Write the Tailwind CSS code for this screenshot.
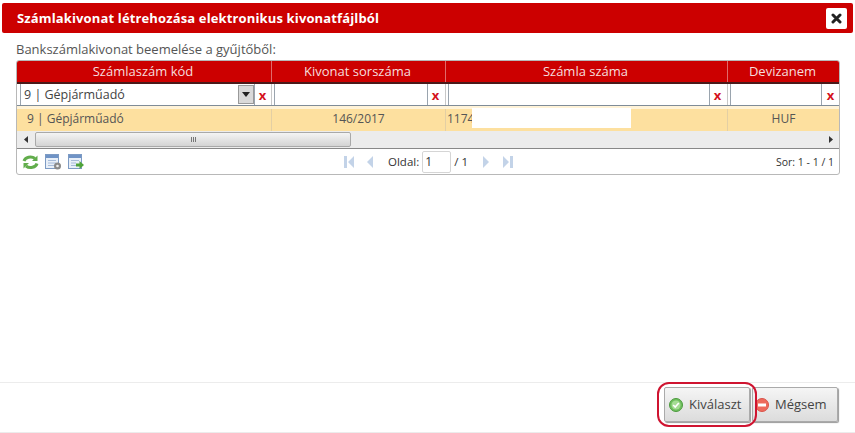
<!doctype html>
<html lang="en">
<head>
    <meta charset="UTF-8">
    <title>Számlakivonat</title>
    <script src="https://cdn.jsdelivr.net/npm/@tailwindcss/browser@4"></script>
</head>
<body class="bg-white">
<div class="relative w-[855px] h-[433px] overflow-hidden flex flex-col font-['Open_Sans',sans-serif] text-[12px] text-[#444]">
    <!-- title bar -->
    <div class="mt-[3px] mx-[2px] h-[30px] shrink-0 bg-[#cc0000] rounded-[2px] flex items-center justify-between pl-[15px] pr-[6px]">
        <span class="text-white font-bold text-[13px] leading-none tracking-[0.14px]">Számlakivonat létrehozása elektronikus kivonatfájlból</span>
        <span class="w-[21px] h-[21px] bg-white rounded-[2px] flex items-center justify-center">
            <svg width="11" height="11" viewBox="0 0 11 11"><path d="M2 2l7 7M9 2l-7 7" stroke="#222" stroke-width="3" stroke-linecap="round"/></svg>
        </span>
    </div>

    <div class="px-[16px] pt-[8px] h-[349px] shrink-0">
        <div class="text-[13px] leading-[17px] h-[19px] text-[#555]">Bankszámlakivonat beemelése a gyűjtőből:</div>
        <!-- grid -->
        <div class="w-[824px] border border-[#b8b8b8] rounded-[3px] overflow-hidden">
            <div class="grid grid-cols-[255px_174px_282px_111px] h-[23px] bg-[#cc0000] text-[#f6dede] text-[13px] border-b-2 border-b-[#4a1a1a]">
                <div class="flex items-center justify-center border-r border-[#e06a6a] pr-[2px]">Számlaszám kód</div>
                <div class="flex items-center justify-center border-r border-[#e06a6a] pr-[2px]">Kivonat sorszáma</div>
                <div class="flex items-center justify-center border-r border-[#e06a6a] pr-[2px]">Számla száma</div>
                <div class="flex items-center justify-center pr-[2px]">Devizanem</div>
            </div>
            <div class="grid grid-cols-[255px_174px_282px_111px] h-[22px] bg-white border-b border-[#7f8c98]">
                <div class="flex items-center pl-[3px] border-r border-[#c8c8c8]">
                    <div class="w-[235px] h-full border-x border-[#9aa4ae] flex items-center justify-between pl-[3px] text-[#444]">
                        <span class="text-[12.500px] pt-[2px]">9 | Gépjárműadó</span>
                        <span class="w-[16px] h-[19px] bg-[#d9d9d9] border border-[#999] flex items-center justify-center"><svg width="8" height="5" viewBox="0 0 8 5"><path d="M0 0h8L4 5z" fill="#222"/></svg></span>
                    </div>
                    <span class="w-[15px] pt-[2px] text-center text-[#d5121e] font-bold text-[13px] leading-none">x</span>
                </div>
                <div class="flex items-center pl-[2px] border-r border-[#c8c8c8]">
                    <div class="w-[154px] h-full border-x border-[#9aa4ae]"></div>
                    <span class="w-[15px] pt-[2px] text-center text-[#d5121e] font-bold text-[13px] leading-none">x</span>
                </div>
                <div class="flex items-center pl-[2px] border-r border-[#c8c8c8]">
                    <div class="w-[262px] h-full border-x border-[#9aa4ae]"></div>
                    <span class="w-[15px] pt-[2px] text-center text-[#d5121e] font-bold text-[13px] leading-none">x</span>
                </div>
                <div class="flex items-center pl-[2px]">
                    <div class="w-[92px] h-full border-x border-[#9aa4ae]"></div>
                    <span class="w-[17px] pt-[2px] text-center text-[#d5121e] font-bold text-[13px] leading-none">x</span>
                </div>
            </div>
            <div class="grid grid-cols-[255px_174px_282px_111px] h-[25px] bg-[#fde09f] border-t-[3px] border-t-[#fff3d8] text-[12px] text-[#555]">
                <div class="flex items-center pl-[10px] pb-[2px] border-r border-[#e3cfa4]">9 | Gépjárműadó</div>
                <div class="flex items-center justify-center pb-[2px] border-r border-[#e3cfa4]">146/2017</div>
                <div class="flex items-start pl-[1px] border-r border-[#e3cfa4]">
                    <span class="w-[25px] whitespace-nowrap leading-[19px]">1174</span>
                    <span class="relative w-[159px] h-[20px] -mt-px bg-white"></span>
                </div>
                <div class="flex items-center justify-center pb-[2px]">HUF</div>
            </div>
            <!-- scrollbar -->
            <div class="h-[18px] bg-[#ececec] border-b border-[#888] flex items-center">
                <span class="w-[18px] flex justify-center"><svg width="4" height="7" viewBox="0 0 4 7"><path d="M4 0v7L0 3.500z" fill="#333"/></svg></span>
                <div class="w-[316px] h-[15px] rounded-[2px] border border-[#a9a9a9] bg-gradient-to-b from-[#f4f4f4] to-[#d4d4d4] flex items-center justify-center">
                    <span class="w-[5px] h-[5px] border-x border-[#777]"><span class="block w-px h-full bg-[#777] mx-auto"></span></span>
                </div>
                <span class="ml-auto w-[16px] flex justify-center"><svg width="4" height="7" viewBox="0 0 4 7"><path d="M0 0v7l4-3.500z" fill="#333"/></svg></span>
            </div>
            <!-- pager -->
            <div class="h-[25px] flex items-center relative text-[11px] text-[#333]">
                <div class="flex items-center gap-[6px] pl-[5px]">
                    <svg width="17" height="16" viewBox="0 0 17 16" fill="none"><path d="M2 7a6.500 5 0 0 1 11-2.500" stroke="#62ad4c" stroke-width="3"/><path d="M15.500 1.500v5.500h-5.500z" fill="#62ad4c"/><path d="M15 9.500a6.500 5 0 0 1-11 2.500" stroke="#62ad4c" stroke-width="3"/><path d="M1.500 14.500v-5.500h5.500z" fill="#62ad4c"/></svg>
                    <svg width="17" height="16" viewBox="0 0 17 16"><rect x="0.500" y="0.500" width="13" height="14" fill="#e8eff8" stroke="#7d9bc4"/><rect x="1" y="1" width="12" height="3" fill="#6f93c6"/><path d="M3 6.500h8M3 9h8M3 11.500h8" stroke="#a6bbd9"/><circle cx="12.500" cy="12" r="3.500" fill="#8a8a8a"/><circle cx="12.500" cy="12" r="1.300" fill="#eee"/></svg>
                    <svg width="17" height="16" viewBox="0 0 17 16"><rect x="0.500" y="0.500" width="13" height="14" fill="#e8eff8" stroke="#7d9bc4"/><rect x="1" y="1" width="12" height="3" fill="#6f93c6"/><path d="M3 6.500h8M3 9h5M3 11.500h5" stroke="#a6bbd9"/><path d="M8 9.500h3.500V7l4.500 4-4.500 4v-2.500H8z" fill="#4fa33a"/></svg>
                </div>
                <!-- pager center -->
                <div class="absolute left-[326px] top-0 h-full flex items-center">
                    <svg width="12" height="14" viewBox="0 0 12 14"><path d="M1 1h3v12H1zM11 1v12L5 7z" fill="#c3d3e8"/></svg>
                    <svg class="ml-[10px]" width="9" height="14" viewBox="0 0 9 14"><path d="M8 1v12L2 7z" fill="#c3d3e8"/></svg>
                    <span class="ml-[14px] text-[11.500px]">Oldal:</span>
                    <span class="ml-[3px] w-[29px] h-[22px] border border-[#d5d5d5] rounded-[2px] pl-[2px] flex items-center text-[12px] bg-white">1</span>
                    <span class="ml-[3px] text-[11.500px]">/ 1</span>
                    <svg class="ml-[14px]" width="9" height="14" viewBox="0 0 9 14"><path d="M1 1v12l6-6z" fill="#c3d3e8"/></svg>
                    <svg class="ml-[11px]" width="12" height="14" viewBox="0 0 12 14"><path d="M1 1v12l6-6zM8 1h3v12H8z" fill="#c3d3e8"/></svg>
                </div>
                <span class="ml-auto pr-[5px] pt-[3px] text-[10.500px] font-medium text-[#333]">Sor: 1 - 1 / 1</span>
            </div>
        </div>
    </div>

    <!-- footer -->
    <div class="h-[51px] shrink-0 border-t border-b border-[#ececec] flex items-start justify-end gap-[2px] pt-[4px] pr-[17px]">
        <button class="w-[86px] h-[35px] border border-[#aaa] rounded-[2px] bg-gradient-to-b from-[#f5f5f5] to-[#dcdcdc] shadow-[1px_1px_1px_#999] flex items-center gap-[6px] pl-[4px] text-[13px] text-[#444]">
            <svg width="14" height="14" viewBox="0 0 14 14"><circle cx="7" cy="7" r="6.500" fill="#6fbf5e" stroke="#4d9a3e"/><circle cx="7" cy="7" r="4.500" fill="#a5dc94"/><path d="M4.200 7l2 2 3.600-4" fill="none" stroke="#fff" stroke-width="1.600"/></svg>
            Kiválaszt
        </button>
        <button class="w-[86px] h-[35px] border border-[#aaa] rounded-[2px] bg-gradient-to-b from-[#f5f5f5] to-[#dcdcdc] shadow-[1px_1px_1px_#999] flex items-center gap-[6px] pl-[2px] text-[13px] text-[#444]">
            <svg width="14" height="14" viewBox="0 0 14 14"><circle cx="7" cy="7" r="6.500" fill="#ee6a5c" stroke="#d9534a"/><rect x="3" y="5.500" width="8" height="3" fill="#fff"/></svg>
            Mégsem
        </button>
    </div>
    <!-- red marker round the button -->
    <div class="absolute left-[657px] top-[382px] w-[100px] h-[45px] border-2 border-[#cf1430] rounded-[12px]"></div>
</div>
</body>
</html>
